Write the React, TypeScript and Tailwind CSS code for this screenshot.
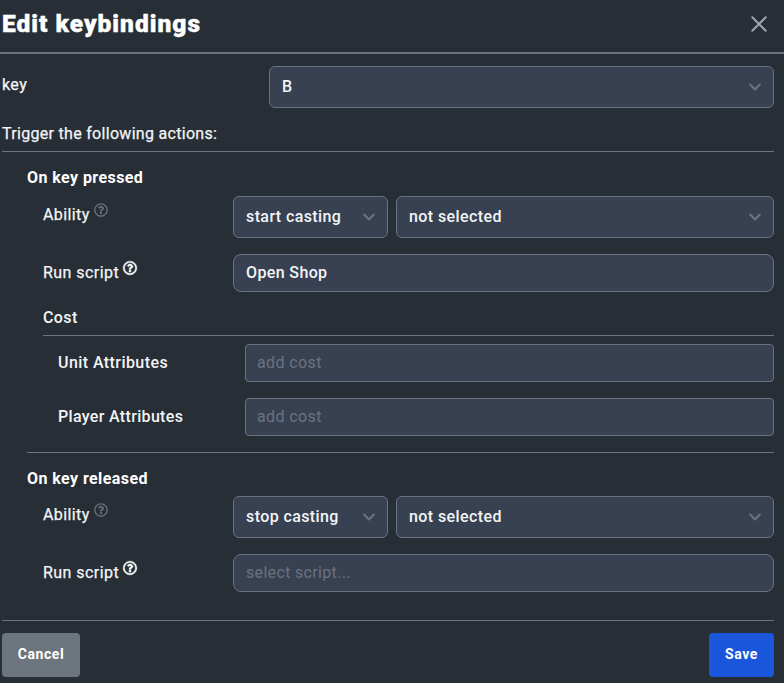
import React from "react";
import { FaRegQuestionCircle } from "react-icons/fa";

const field = "flex items-center border border-[#6b7280] bg-[#374151] text-[#f3f4f6]";

function Chevron() {
  return (
    <svg className="ml-auto size-6 shrink-0" viewBox="0 0 20 20" fill="none">
      <path d="M6 8l4 4 4-4" stroke="#6b7280" strokeWidth="1.8" strokeLinecap="round" strokeLinejoin="round" />
    </svg>
  );
}

function Select({ children, className }: { children: React.ReactNode; className: string }) {
  return (
    <button className={`${field} h-[42px] rounded-md pl-3 pr-[6px] font-medium tracking-[0.4px] ${className}`}>
      {children}
      <Chevron />
    </button>
  );
}

function Events({ title, mode, script, placeholder, gap }: { title: string; mode: string; script?: string; placeholder?: string; gap: string }) {
  return (
    <>
      <h2 className="h-6 font-bold leading-6 tracking-[0.42px] text-white">{title}</h2>
      <div className={`${gap} flex h-[42px] pl-4`}>
        <div className="flex w-[190px] pt-[7px] leading-6">
          <span className="tracking-[0.4px] [-webkit-text-stroke:0.25px]">Ability</span>
          <FaRegQuestionCircle className="ml-1 size-[14px] text-[#6b7280]" />
        </div>
        <Select className="w-[155px]">{mode}</Select>
        <Select className="ml-2 flex-1">not selected</Select>
      </div>
      <div className="mt-4 flex h-[38px] pl-4">
        <div className="flex w-[190px] pt-[7px] leading-6">
          <span className="tracking-[0.45px] [-webkit-text-stroke:0.25px]">Run script</span>
          <FaRegQuestionCircle className="ml-1 size-[14px] overflow-visible text-white" stroke="white" strokeWidth={18} />
        </div>
        <div className={`${field} flex-1 rounded-lg px-3`}>
          {script ? (
            <span className="font-medium tracking-[0.37px]">{script}</span>
          ) : (
            <span className="tracking-[0.33px] text-[#6b7280]">{placeholder}</span>
          )}
        </div>
      </div>
    </>
  );
}

function CostRow({ label, tracking }: { label: string; tracking: string }) {
  return (
    <div className="flex h-[38px] pl-[15px]">
      <div className={`w-[187px] pt-[7px] font-medium leading-6 ${tracking}`}>{label}</div>
      <div className={`${field} flex-1 rounded-[4px] px-[11px]`}>
        <span className="tracking-[0.38px] text-[#6b7280]">add cost</span>
      </div>
    </div>
  );
}

export default function App() {
  return (
    <div className="h-[683px] w-[784px] overflow-hidden bg-[#272e35] font-[Roboto,'Liberation_Sans',sans-serif] text-base text-[#f3f4f6]">
      <header className="flex h-[54px] justify-between border-b-2 border-[#6b7280] pl-[2px] pr-[17px]">
        <h1 className="pt-2 text-[24.5px] font-black leading-8 tracking-[1px] text-white [-webkit-text-stroke:0.4px]">Edit keybindings</h1>
        <svg className="mt-4 size-4" viewBox="0 0 16 16" fill="none" stroke="#9ca3af" strokeWidth="2.1" strokeLinecap="round">
          <path d="M1.3 1.3l13.4 13.4M14.7 1.3L1.3 14.7" />
        </svg>
      </header>
      <main className="pl-[2px] pr-[10px]">
        <div className="flex h-[67px] pt-3">
          <div className="w-[267px] pt-[7px] leading-6 tracking-[0.4px] [-webkit-text-stroke:0.25px]">key</div>
          <Select className="flex-1">B</Select>
        </div>
        <div className="h-[31px] border-b border-[#6b7280] pt-px leading-6 tracking-[0.3px] [-webkit-text-stroke:0.25px]">
          Trigger the following actions:
        </div>
        <section className="pl-[25px]">
          <div className="pt-[14px]">
            <Events title="On key pressed" mode="start casting" script="Open Shop" gap="mt-[6px]" />
          </div>
          <div className="pl-4 pt-[13px]">
            <div className="h-[31px] border-b border-[#6b7280] pt-px font-medium leading-6 tracking-[0.4px]">Cost</div>
            <div className="mt-2 flex flex-col gap-4">
              <CostRow label="Unit Attributes" tracking="tracking-[0.43px]" />
              <CostRow label="Player Attributes" tracking="tracking-[0.33px]" />
            </div>
          </div>
          <div className="mt-4 border-t border-[#6b7280] pt-[14px]">
            <Events title="On key released" mode="stop casting" placeholder="select script..." gap="mt-[5px]" />
          </div>
        </section>
        <footer className="mt-7 flex justify-between border-t border-[#6b7280] pt-3 text-sm font-bold text-white">
          <button className="h-11 w-[78px] rounded-[4px] bg-[#6c757d] pb-[2px] tracking-[0.6px]">Cancel</button>
          <button className="h-11 w-[65px] rounded-[4px] bg-[#1a56db] pb-[2px] tracking-[0.6px]">Save</button>
        </footer>
      </main>
    </div>
  );
}
